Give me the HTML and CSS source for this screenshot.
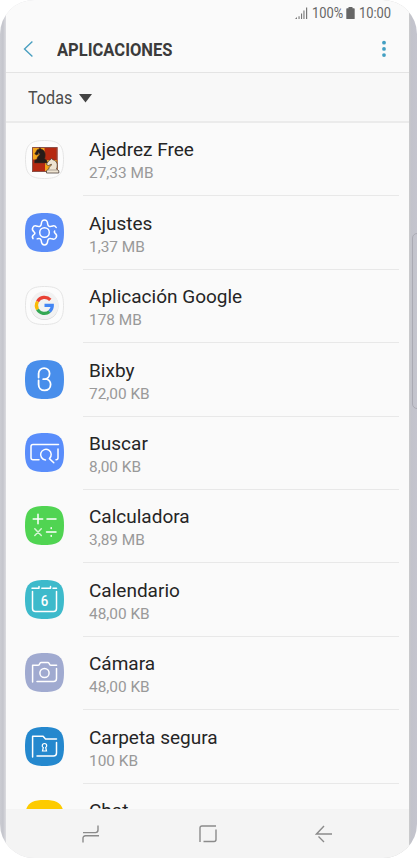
FILE: index.html
```html
<!DOCTYPE html>
<html lang="es">
<head>
    <meta charset="UTF-8">
    <title>Aplicaciones</title>
    <link rel="stylesheet" href="styles.css">
</head>
<body>
    <div id="phone">
        <div id="edge"></div>
        <div id="screen">
            <div class="status">
                <svg width="13" height="13" viewBox="0 0 13 13"><path d="M0 12h2v-2zM3.5 12V9.3h1.1V12zM6 12V6.5h1.1V12zM8.4 12V3.5h1.1V12zM11 12V.5h1.2V12z" fill="#777"/></svg>
                <span class="percent"><b>100%</b></span>
                <svg width="9" height="13" viewBox="0 0 9 13"><path d="M2.5 0h4v1.3H8q.7 0 .7.7v9.4q0 .7-.7.7H1q-.7 0-.7-.7V2q0-.7.7-.7h1.5z" fill="#666"/></svg>
                <span class="time"><b>10:00</b></span>
            </div>
            <div class="header">
                <svg width="11" height="18" viewBox="0 0 11 18"><path d="M9.4 1.500L1.500 9l7.900 7.500" fill="none" stroke="#4a9fc0" stroke-width="1.4"/></svg>
                <h1>APLICACIONES</h1>
                <svg class="more" width="6" height="18" viewBox="0 0 6 18" fill="#429fc2"><circle cx="3" cy="2.700" r="1.900"/><circle cx="3" cy="8.900" r="1.900"/><circle cx="3" cy="15.100" r="1.900"/></svg>
            </div>
            <div class="filter">
                <span>Todas</span>
                <svg width="13" height="9" viewBox="0 0 13 9"><path d="M0 0h13L6.500 8.500z" fill="#444"/></svg>
            </div>
            <ul>
                <li>
                    <svg class="icon" viewBox="0 0 39 39">
                        <path class="tile light" d="M19.500.5C34 .5 38.500 5 38.500 19.500S34 38.500 19.500 38.500.5 34 .5 19.500 5 .5 19.500.5z"/>
                        <path d="M7 7h25.500v25H7z" fill="#b52810"/><path d="M7 7h12.500v12.500H7zM20 20h12.500v12H20z" fill="#f4a51b"/>
                        <path d="M7.500 7.500h24.500v24h-24.500z" fill="none" stroke="#8b5149"/>
                        <path d="M9.500 23v-2.500l2.500-1.500c0-3 3-3.500 3-5.500l-3.500 1.500-1.800-1 2.500-4.300 2-.8.6-1.400 1.200 1.600c4.400 1 5 5.500 3.800 9.700l2.200 1.700V23z" fill="#271b18" stroke="#55301d" stroke-width=".5"/>
                        <path d="M21.500 33v-2.300l2.300-1.700c0-2.500 2.700-3 2.700-4.700l-3.200 1.300-2-1.300 2.700-3.900 1.800-.9.7-1.300 1.200 1.500c4.600.9 5.400 5.200 3.800 9.500l2.300 1.500V33z" fill="#eee4d2" stroke="#4d4038" stroke-width=".8"/>
                        <path d="M13 13.200h1M23 30h9" stroke="#9c9185" stroke-width=".8"/>
                    </svg>
                    <div class="app"><h2>Ajedrez Free</h2><p>27,33 MB</p></div>
                </li>
                <li>
                    <svg class="icon" viewBox="0 0 39 39">
                        <path class="tile" fill="#5b8df8" d="M19.500 0C34.500 0 39 4.500 39 19.500S34.500 39 19.500 39 0 34.500 0 19.500 4.500 0 19.500 0z"/>
                        <g class="line"><circle cx="19.500" cy="19.500" r="4.800"/><path d="M12.200 25.800c2-1 3.800 0 4.100 2.100.2 3 1 4 3.200 4s3-1 3.200-4c.3-2.100 2.100-3.100 4.100-2.100 2.500 1 3.400.6 4.400-1.300s.7-2.800-1.200-4.300c-.7-.5-.9-1.400-.3-2.200M26.800 13.200c-2 1-3.800 0-4.100-2.100-.2-3-1-4-3.200-4s-3 1-3.200 4c-.3 2.100-2.100 3.100-4.100 2.100-2.500-1-3.400-.6-4.400 1.300s-.7 2.800 1.200 4.300c1.200.9 1.200 1.800 0 2.700-1.800 1.200-2.200 2.300-1 4.200M26.800 13.200c2.500-1 3.400-.6 4.400 1.300"/></g>
                    </svg>
                    <div class="app"><h2>Ajustes</h2><p>1,37 MB</p></div>
                </li>
                <li>
                    <svg class="icon" viewBox="0 0 39 39">
                        <path class="tile light" d="M19.500.5C34 .5 38.500 5 38.500 19.500S34 38.500 19.500 38.500.5 34 .5 19.500 5 .5 19.500.5z"/>
                        <circle cx="19.500" cy="20" r="14" fill="#d8d8d8"/><circle cx="19.500" cy="19.300" r="14" fill="#f2f2f2"/>
                        <g fill="none" stroke-width="3.200"><path d="M25.300 13.800A8 8 0 0 0 12.500 15.500" stroke="#e94235"/><path d="M12.500 15.500A8 8 0 0 0 12.500 23.500" stroke="#fabb05"/><path d="M12.500 23.500A8 8 0 0 0 24.600 25.500" stroke="#34a853"/><path d="M24.600 25.500A8 8 0 0 0 27.300 19.300H19.500" stroke="#4285f4"/></g>
                    </svg>
                    <div class="app"><h2>Aplicación Google</h2><p>178 MB</p></div>
                </li>
                <li>
                    <svg class="icon" viewBox="0 0 39 39">
                        <path class="tile" fill="#488eeb" d="M19.500 0C34.500 0 39 4.500 39 19.500S34.500 39 19.500 39 0 34.500 0 19.500 4.500 0 19.500 0z"/>
                        <path class="line bixby" d="M13.600 17.500v-3.900a5.500 5.500 0 0 1 11 0c0 3.200-2.400 5.600-5.400 5.600h-1M13.600 20.500v3.900c0 3.600 2.500 6 6 6s6-2.400 6-5.800c0-2.600-1.500-4.500-3.500-5.400"/>
                    </svg>
                    <div class="app"><h2>Bixby</h2><p>72,00 KB</p></div>
                </li>
                <li>
                    <svg class="icon" viewBox="0 0 39 39">
                        <path class="tile" fill="#598dfb" d="M19.500 0C34.500 0 39 4.500 39 19.500S34.500 39 19.500 39 0 34.500 0 19.500 4.500 0 19.500 0z"/>
                        <path class="line" d="M33.500 11.500H8q-2 0-2 2v11.200q0 2 2 2h6M33 16v8.700q0 2-2 2M20.500 26.900a5.300 5.300 0 1 1 3.900-1.300l4.400 4.200"/>
                    </svg>
                    <div class="app"><h2>Buscar</h2><p>8,00 KB</p></div>
                </li>
                <li>
                    <svg class="icon" viewBox="0 0 39 39">
                        <path class="tile" fill="#50d452" d="M19.500 0C34.500 0 39 4.500 39 19.500S34.500 39 19.500 39 0 34.500 0 19.500 4.500 0 19.500 0z"/>
                        <path class="line" d="M8.200 13h9.500M13 8.200v9.600M22 13h9M21.500 26H31M26.200 21.800v.8M26.200 29.400v.8"/>
                        <path class="line soft" d="M9.800 22.800l6.500 6.700M16.300 22.800l-6.500 6.700"/>
                    </svg>
                    <div class="app"><h2>Calculadora</h2><p>3,89 MB</p></div>
                </li>
                <li>
                    <svg class="icon" viewBox="0 0 39 39">
                        <path class="tile" fill="#3dbacb" d="M19.500 0C34.500 0 39 4.500 39 19.500S34.500 39 19.500 39 0 34.500 0 19.500 4.500 0 19.500 0z"/>
                        <path class="line" d="M7 8.300h7V6.500M16.800 8.300h8.700V6.500M28 8.300h3.500M7.500 11.500v17q0 3 3 3h18q3 0 3-3v-17"/>
                        <text x="19.500" y="25.500" text-anchor="middle" textLength="7.500" lengthAdjust="spacingAndGlyphs">6</text>
                    </svg>
                    <div class="app"><h2>Calendario</h2><p>48,00 KB</p></div>
                </li>
                <li>
                    <svg class="icon" viewBox="0 0 39 39">
                        <path class="tile" fill="#a0aad0" d="M19.500 0C34.500 0 39 4.500 39 19.500S34.500 39 19.500 39 0 34.500 0 19.500 4.500 0 19.500 0z"/>
                        <g class="line"><circle cx="19.500" cy="20" r="4.600"/><path d="M7.600 29V12.300h5.300q1 0 1.500-1l.4-.8q.5-1 1.500-1h6.400q1 0 1.500 1l.4.8q.5 1 1.500 1h5.500M31.500 15.500v10q0 3-3 3H12"/></g>
                    </svg>
                    <div class="app"><h2>Cámara</h2><p>48,00 KB</p></div>
                </li>
                <li>
                    <svg class="icon" viewBox="0 0 39 39">
                        <path class="tile" fill="#2488ce" d="M19.500 0C34.500 0 39 4.500 39 19.500S34.500 39 19.500 39 0 34.500 0 19.500 4.500 0 19.500 0z"/>
                        <path class="line" d="M7.600 30V9.300h10.500l2.400 2.800h11M31.500 15.500V26q0 3-3 3H12"/>
                        <path d="M17.300 19.500v-.8a2.200 2.200 0 0 1 4.400 0c0 1-.5 1.400-1 1.800l.8 3.500h-4l.8-3.500c-.7-.3-1-.5-1-1z" fill="none" stroke="#fff" stroke-width="1.200"/>
                    </svg>
                    <div class="app"><h2>Carpeta segura</h2><p>100 KB</p></div>
                </li>
                <li>
                    <svg class="icon" viewBox="0 0 39 39">
                        <path class="tile" fill="#fdcb00" d="M19.500 0C34.500 0 39 4.500 39 19.500S34.500 39 19.500 39 0 34.500 0 19.500 4.500 0 19.500 0z"/>
                    </svg>
                    <div class="app"><h2>Chat</h2></div>
                </li>
            </ul>
        </div>
        <div class="nav">
            <svg width="18" height="18" viewBox="0 0 18 18"><path d="M1 7.600h12.500q2.500 0 2.500-2.500V.5M17 10.800H3.500q-2.500 0-2.500 2.500v4.200"/></svg>
            <svg width="18" height="18" viewBox="0 0 18 18"><path d="M1 17V3q0-2 2-2h14M17 4.500v10q0 2-2 2H4.500"/></svg>
            <svg width="18" height="18" viewBox="0 0 18 18"><path d="M17 9H1.500L9 1M3.500 11.500L9 17"/></svg>
        </div>
    </div>
</body>
</html>
```
FILE: styles.css
```css
body,ul,li,p,h1,h2 {margin:0;padding:0;}
ul {list-style-type:none;}
body {background:#fff;font-family:Roboto,"Liberation Sans",sans-serif;overflow:hidden;}
svg {display:block;flex:none;}

#phone {position:relative;width:417px;height:858px;border-radius:34px;overflow:hidden;background:linear-gradient(90deg,#cbccd2 0,#c4c5cc 3px,#dcdce0 6px,#ccc 409px,#c2c3cb 411px,#c4c4ce 417px);}
#screen {height:809px;margin:0 8px 0 6px;background:#fafafa;overflow:hidden;}
#edge {position:absolute;right:-5px;top:233px;width:8px;height:174px;border:1px solid #aaaab3;border-radius:6px;}

.status {display:flex;align-items:center;height:26px;padding-left:289px;color:#666;font-size:15px;line-height:26px;}
.status b {display:block;font-weight:400;transform:scaleX(.86);transform-origin:0 50%;white-space:nowrap;}
.percent {width:31px;margin:0 3px 0 4px;}
.time {width:33px;margin-left:4px;}

.header {display:flex;align-items:center;box-sizing:border-box;height:47px;padding:0 22px 0 17px;border-bottom:1px solid #e4e4e4;}
.header h1 {margin-left:23px;font-size:19px;line-height:46px;padding-top:1px;font-weight:700;color:#3b3b3b;transform:scaleX(.87);transform-origin:0 50%;}
.more {margin-left:auto;}

.filter {display:flex;align-items:center;box-sizing:border-box;height:50px;padding-left:22px;background:#f8f8f8;border-bottom:2px solid #ebebeb;font-size:19px;color:#4c4c4c;}
.filter span {width:51px;transform:scaleX(.85);transform-origin:0 50%;}
.filter svg {margin-top:2px;}

li {display:flex;box-sizing:border-box;height:73.4px;padding:16.500px 10px 0 19px;}
.icon {width:39px;height:39px;margin-right:19px;}
.light {fill:#fcfcfc;stroke:#e5e5e5;}
.line {fill:none;stroke:#fff;stroke-width:1.5;stroke-linecap:round;stroke-linejoin:round;}
.bixby {stroke-width:1.8;}
.soft {stroke:#d6f5d6;}
.icon text {fill:#fff;font-size:15px;font-weight:500;}
.app {flex:1;box-sizing:border-box;height:73.4px;margin-top:-16.500px;padding:14.400px 0 0 6px;border-bottom:1px solid #e8e8e8;}
h2 {font-size:19px;line-height:25px;font-weight:400;color:#252525;}
.app p {font-size:15.400px;line-height:22px;color:#999;}

.nav {display:flex;justify-content:space-between;align-items:center;box-sizing:border-box;height:49px;padding:0 76px;margin:0 8px 0 6px;background:#f4f4f4;}
.nav path {fill:none;stroke:#8b8b8b;stroke-width:1.400;}
```
